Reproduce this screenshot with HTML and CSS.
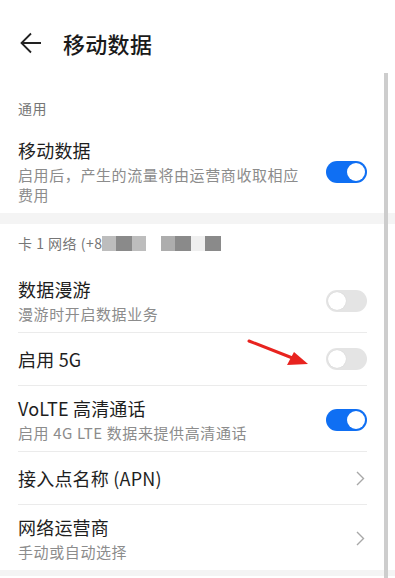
FILE: index.html
```html
<!DOCTYPE html>
<html lang="zh-CN">
<head>
    <meta charset="UTF-8">
    <meta name="viewport" content="width=device-width, initial-scale=1.0">
    <title>移动数据</title>
    <link rel="stylesheet" href="styles.css">
</head>
<body>
    <div class="screen">
        <header class="topbar">
            <svg class="back" width="22" height="22" viewBox="0 0 22 22">
                <path d="M11 1.5 L1.5 11 L11 20.5 M1.5 11 H21" fill="none" stroke="#222" stroke-width="1.8" stroke-linejoin="miter"/>
            </svg>
            <h1 class="title">移动数据</h1>
        </header>

        <div class="section-label first">通用</div>
        <div class="row two-line">
            <div class="texts">
                <div class="row-title">移动数据</div>
                <div class="row-sub">启用后，产生的流量将由运营商收取相应<br>费用</div>
            </div>
            <span class="toggle on"></span>
        </div>

        <div class="band"></div>

        <div class="section-label">卡 1 网络 (+8<span class="mask m1"></span><span class="mask m2"></span><span class="mask m1"></span><span class="gap"></span><span class="mask m3"></span><span class="mask m2"></span><span class="mask m4"></span><span class="mask m2"></span></div>

        <div class="row two-line divided">
            <div class="texts">
                <div class="row-title">数据漫游</div>
                <div class="row-sub">漫游时开启数据业务</div>
            </div>
            <span class="toggle"></span>
        </div>
        <div class="row one-line divided">
            <div class="row-title">启用 5G</div>
            <span class="toggle"></span>
        </div>
        <div class="row two-line divided">
            <div class="texts">
                <div class="row-title">VoLTE 高清通话</div>
                <div class="row-sub">启用 4G LTE 数据来提供高清通话</div>
            </div>
            <span class="toggle on"></span>
        </div>
        <div class="row one-line divided">
            <div class="row-title">接入点名称 (APN)</div>
            <svg class="chevron" width="9" height="15" viewBox="0 0 9 15"><path d="M1 1 L7.5 7.5 L1 14" fill="none" stroke="#a8a8a8" stroke-width="1.4"/></svg>
        </div>
        <div class="row two-line">
            <div class="texts">
                <div class="row-title">网络运营商</div>
                <div class="row-sub">手动或自动选择</div>
            </div>
            <svg class="chevron" width="9" height="15" viewBox="0 0 9 15"><path d="M1 1 L7.5 7.5 L1 14" fill="none" stroke="#a8a8a8" stroke-width="1.4"/></svg>
        </div>

        <div class="band bottom"></div>

        <div class="scrollbar"></div>
        <svg class="pointer" width="70" height="32" viewBox="0 0 70 32">
            <path d="M2 2 L48 20" stroke="#e8231f" stroke-width="3" stroke-linecap="round"/>
            <path d="M61 25 L40 26 L47 13 Z" fill="#e8231f"/>
        </svg>
    </div>
</body>
</html>
```

FILE: styles.css
```css
* { box-sizing: border-box; }
body { margin: 0; background: #fff; font-family: "Noto Sans CJK SC", "Noto Sans", sans-serif; color: #1e1e1e; }
.screen { position: relative; width: 395px; height: 578px; overflow: hidden; background: #fff; }

.topbar { height: 86px; display: flex; align-items: center; padding-left: 20px; }
.back { flex: none; }
.title { margin: 0 0 0 21px; font-size: 22px; font-weight: 500; letter-spacing: 0.3px; line-height: 30px; color: #1a1a1a; }

.section-label { padding: 9px 28px 14px 18px; font-size: 14px; line-height: 20px; color: #767676; letter-spacing: 0.5px; display: flex; align-items: center; }
.section-label.first { padding-top: 12px; padding-bottom: 10px; }

.mask { display: inline-block; width: 14px; height: 15px; }
.m1 { background: #bdbdbd; }
.m2 { background: #8a8a8a; width: 16px; }
.m3 { background: #adadad; }
.m4 { background: #efefef; }
.gap { display: inline-block; width: 15px; }

.row { margin: 0 28px 0 18px; display: flex; align-items: center; justify-content: space-between; }
.row.divided { border-bottom: 1px solid #ebebeb; }
.row.two-line { padding: 10px 0 8px; }
.row.one-line { height: 53px; }
.texts { display: flex; flex-direction: column; }
.row-title { font-size: 18px; line-height: 24px; color: #1e1e1e; letter-spacing: 0.2px; }
.row-sub { margin-top: 3px; font-size: 15px; line-height: 20px; color: #8c8c8c; letter-spacing: 0.6px; }

.toggle { position: relative; flex: none; width: 41px; height: 22px; border-radius: 11px; background: #e4e4e4; }
.toggle::after { content: ""; position: absolute; top: 2px; left: 2px; width: 18px; height: 18px; border-radius: 50%; background: #fff; box-shadow: 0 0 1px rgba(0, 0, 0, 0.15); }
.toggle.on { background: #0f6ff3; }
.toggle.on::after { left: 21px; box-shadow: none; }

.chevron { flex: none; margin-right: 2px; }

.band { height: 11px; background: #f4f4f4; }
.band.bottom { height: 6px; }

.scrollbar { position: absolute; left: 384px; top: 73px; bottom: 0; width: 4px; background: #cdcdcd; }
.pointer { position: absolute; left: 247px; top: 339px; }
```
